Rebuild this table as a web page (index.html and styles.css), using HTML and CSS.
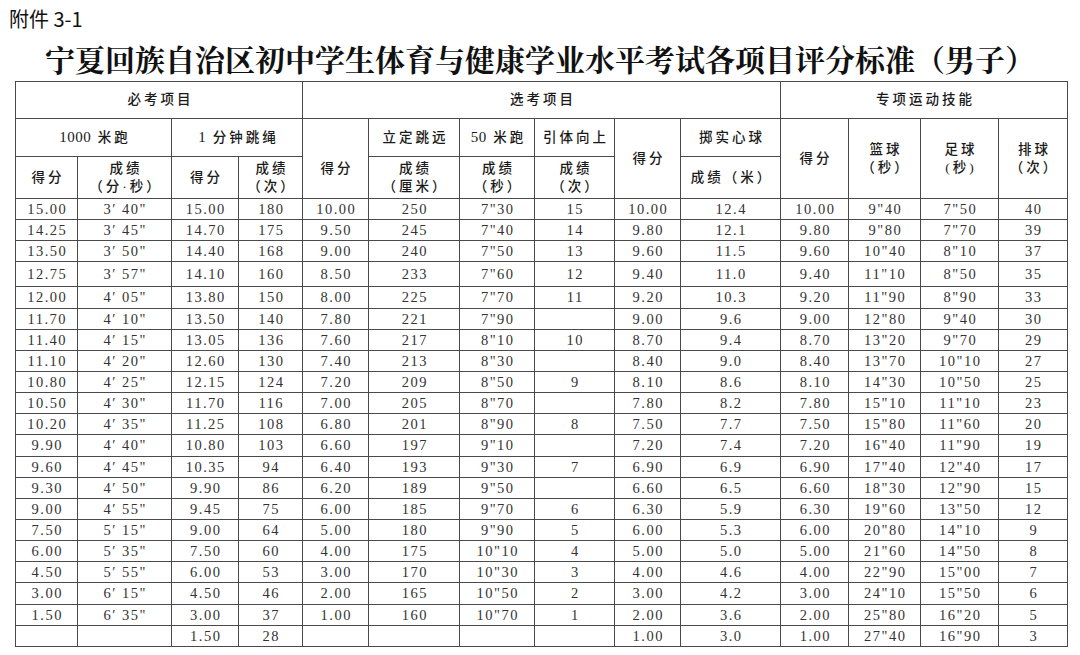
FILE: index.html
```html
<!DOCTYPE html>
<html lang="zh-CN">
<head>
<meta charset="utf-8">
<title>宁夏回族自治区初中学生体育与健康学业水平考试各项目评分标准（男子）</title>
<link rel="stylesheet" href="styles.css">
</head>
<body>
<div class="page">
  <div class="attach">附件 3-1</div>
  <h1 class="title">宁夏回族自治区初中学生体育与健康学业水平考试各项目评分标准（男子）</h1>
  <table class="score">
    <colgroup>
      <col class="c62"><col class="c94"><col class="c67"><col class="c64">
      <col class="c66"><col class="c91"><col class="c75"><col class="c80">
      <col class="c66"><col class="c100"><col class="c68"><col class="c72">
      <col class="c78"><col class="c69">
    </colgroup>
    <thead>
      <tr class="h1">
        <th colspan="4">必考项目</th>
        <th colspan="6">选考项目</th>
        <th colspan="4">专项运动技能</th>
      </tr>
      <tr class="h2">
        <th colspan="2"><span class="num">1000</span> 米跑</th>
        <th colspan="2"><span class="num">1</span> 分钟跳绳</th>
        <th rowspan="2" class="low">得分</th>
        <th>立定跳远</th>
        <th><span class="num">50</span> 米跑</th>
        <th>引体向上</th>
        <th rowspan="2">得分</th>
        <th>掷实心球</th>
        <th rowspan="2">得分</th>
        <th rowspan="2">篮球<br>（秒）</th>
        <th rowspan="2">足球<br>(秒)</th>
        <th rowspan="2">排球<br>（次）</th>
      </tr>
      <tr class="h3">
        <th>得分</th>
        <th>成绩<br>（分·秒）</th>
        <th>得分</th>
        <th>成绩<br>（次）</th>
        <th>成绩<br>（厘米）</th>
        <th>成绩<br>（秒）</th>
        <th>成绩<br>（次）</th>
        <th>成绩（米）</th>
      </tr>
    </thead>
    <tbody>
      <tr><td>15.00</td><td>3′ 40"</td><td>15.00</td><td>180</td><td>10.00</td><td>250</td><td>7"30</td><td>15</td><td>10.00</td><td>12.4</td><td>10.00</td><td>9"40</td><td>7"50</td><td>40</td></tr>
      <tr><td>14.25</td><td>3′ 45"</td><td>14.70</td><td>175</td><td>9.50</td><td>245</td><td>7"40</td><td>14</td><td>9.80</td><td>12.1</td><td>9.80</td><td>9"80</td><td>7"70</td><td>39</td></tr>
      <tr><td>13.50</td><td>3′ 50"</td><td>14.40</td><td>168</td><td>9.00</td><td>240</td><td>7"50</td><td>13</td><td>9.60</td><td>11.5</td><td>9.60</td><td>10"40</td><td>8"10</td><td>37</td></tr>
      <tr class="tall"><td>12.75</td><td>3′ 57"</td><td>14.10</td><td>160</td><td>8.50</td><td>233</td><td>7"60</td><td>12</td><td>9.40</td><td>11.0</td><td>9.40</td><td>11"10</td><td>8"50</td><td>35</td></tr>
      <tr><td>12.00</td><td>4′ 05"</td><td>13.80</td><td>150</td><td>8.00</td><td>225</td><td>7"70</td><td>11</td><td>9.20</td><td>10.3</td><td>9.20</td><td>11"90</td><td>8"90</td><td>33</td></tr>
      <tr><td>11.70</td><td>4′ 10"</td><td>13.50</td><td>140</td><td>7.80</td><td>221</td><td>7"90</td><td></td><td>9.00</td><td>9.6</td><td>9.00</td><td>12"80</td><td>9"40</td><td>30</td></tr>
      <tr><td>11.40</td><td>4′ 15"</td><td>13.05</td><td>136</td><td>7.60</td><td>217</td><td>8"10</td><td>10</td><td>8.70</td><td>9.4</td><td>8.70</td><td>13"20</td><td>9"70</td><td>29</td></tr>
      <tr><td>11.10</td><td>4′ 20"</td><td>12.60</td><td>130</td><td>7.40</td><td>213</td><td>8"30</td><td></td><td>8.40</td><td>9.0</td><td>8.40</td><td>13"70</td><td>10"10</td><td>27</td></tr>
      <tr><td>10.80</td><td>4′ 25"</td><td>12.15</td><td>124</td><td>7.20</td><td>209</td><td>8"50</td><td>9</td><td>8.10</td><td>8.6</td><td>8.10</td><td>14"30</td><td>10"50</td><td>25</td></tr>
      <tr><td>10.50</td><td>4′ 30"</td><td>11.70</td><td>116</td><td>7.00</td><td>205</td><td>8"70</td><td></td><td>7.80</td><td>8.2</td><td>7.80</td><td>15"10</td><td>11"10</td><td>23</td></tr>
      <tr><td>10.20</td><td>4′ 35"</td><td>11.25</td><td>108</td><td>6.80</td><td>201</td><td>8"90</td><td>8</td><td>7.50</td><td>7.7</td><td>7.50</td><td>15"80</td><td>11"60</td><td>20</td></tr>
      <tr><td>9.90</td><td>4′ 40"</td><td>10.80</td><td>103</td><td>6.60</td><td>197</td><td>9"10</td><td></td><td>7.20</td><td>7.4</td><td>7.20</td><td>16"40</td><td>11"90</td><td>19</td></tr>
      <tr><td>9.60</td><td>4′ 45"</td><td>10.35</td><td>94</td><td>6.40</td><td>193</td><td>9"30</td><td>7</td><td>6.90</td><td>6.9</td><td>6.90</td><td>17"40</td><td>12"40</td><td>17</td></tr>
      <tr><td>9.30</td><td>4′ 50"</td><td>9.90</td><td>86</td><td>6.20</td><td>189</td><td>9"50</td><td></td><td>6.60</td><td>6.5</td><td>6.60</td><td>18"30</td><td>12"90</td><td>15</td></tr>
      <tr><td>9.00</td><td>4′ 55"</td><td>9.45</td><td>75</td><td>6.00</td><td>185</td><td>9"70</td><td>6</td><td>6.30</td><td>5.9</td><td>6.30</td><td>19"60</td><td>13"50</td><td>12</td></tr>
      <tr><td>7.50</td><td>5′ 15"</td><td>9.00</td><td>64</td><td>5.00</td><td>180</td><td>9"90</td><td>5</td><td>6.00</td><td>5.3</td><td>6.00</td><td>20"80</td><td>14"10</td><td>9</td></tr>
      <tr><td>6.00</td><td>5′ 35"</td><td>7.50</td><td>60</td><td>4.00</td><td>175</td><td>10"10</td><td>4</td><td>5.00</td><td>5.0</td><td>5.00</td><td>21"60</td><td>14"50</td><td>8</td></tr>
      <tr><td>4.50</td><td>5′ 55"</td><td>6.00</td><td>53</td><td>3.00</td><td>170</td><td>10"30</td><td>3</td><td>4.00</td><td>4.6</td><td>4.00</td><td>22"90</td><td>15"00</td><td>7</td></tr>
      <tr><td>3.00</td><td>6′ 15"</td><td>4.50</td><td>46</td><td>2.00</td><td>165</td><td>10"50</td><td>2</td><td>3.00</td><td>4.2</td><td>3.00</td><td>24"10</td><td>15"50</td><td>6</td></tr>
      <tr><td>1.50</td><td>6′ 35"</td><td>3.00</td><td>37</td><td>1.00</td><td>160</td><td>10"70</td><td>1</td><td>2.00</td><td>3.6</td><td>2.00</td><td>25"80</td><td>16"20</td><td>5</td></tr>
      <tr><td></td><td></td><td>1.50</td><td>28</td><td></td><td></td><td></td><td></td><td>1.00</td><td>3.0</td><td>1.00</td><td>27"40</td><td>16"90</td><td>3</td></tr>
    </tbody>
  </table>
</div>
</body>
</html>
```
FILE: styles.css
```css
html, body {
  margin: 0;
  padding: 0;
  background: #ffffff;
}

.page {
  width: 1080px;
  height: 655px;
  overflow: hidden;
}

.attach {
  height: 38px;
  line-height: 38px;
  padding-left: 9px;
  font-family: "Noto Sans CJK SC", "DejaVu Sans", sans-serif;
  font-size: 20px;
  color: #111;
}

.title {
  margin: 0;
  height: 43px;
  line-height: 40px;
  text-align: center;
  font-family: "Noto Serif CJK SC", "Noto Sans CJK SC", serif;
  font-weight: 700;
  font-size: 30px;
  color: #111;
}

.score {
  margin-left: 15px;
  width: 1052px;
  table-layout: fixed;
  border-collapse: collapse;
}

.c62 { width: 62px; }
.c94 { width: 94px; }
.c67 { width: 67px; }
.c64 { width: 64px; }
.c66 { width: 66px; }
.c91 { width: 91px; }
.c75 { width: 75px; }
.c80 { width: 80px; }
.c100 { width: 100px; }
.c68 { width: 68px; }
.c72 { width: 72px; }
.c78 { width: 78px; }
.c69 { width: 69px; }

.score th,
.score td {
  border: 1px solid #4a4a4a;
  padding: 0;
  text-align: center;
  vertical-align: middle;
}

.score th {
  font-family: "Liberation Serif", "Noto Sans CJK SC", serif;
  font-weight: 500;
  font-size: 13.5px;
  line-height: 18px;
  letter-spacing: 3px;
  padding-left: 3px;
  color: #1a1a1a;
}

.score th .num {
  font-size: 15px;
  letter-spacing: 0.5px;
}

.score th.low {
  padding-top: 20px;
}

.h1 { height: 37px; }
.h2 { height: 38px; }
.h3 { height: 42px; }

.score td {
  font-family: "Liberation Serif", serif;
  font-size: 14.5px;
  line-height: 16px;
  letter-spacing: 1.5px;
  padding-left: 1.5px;
  color: #333;
}

.score tbody tr { height: 21.15px; }
.score tbody tr.tall { height: 25px; }
```
